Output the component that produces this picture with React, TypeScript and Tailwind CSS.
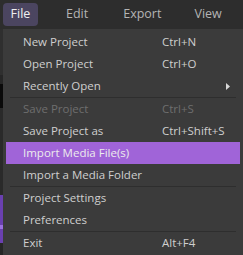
type Item = { label: string; shortcut?: string; disabled?: boolean; active?: boolean; submenu?: boolean; sep?: boolean };

const items: Item[] = [
  { label: "New Project", shortcut: "Ctrl+N" },
  { label: "Open Project", shortcut: "Ctrl+O" },
  { label: "Recently Open", submenu: true },
  { label: "Save Project", shortcut: "Ctrl+S", disabled: true, sep: true },
  { label: "Save Project as", shortcut: "Ctrl+Shift+S" },
  { label: "Import Media File(s)", active: true },
  { label: "Import a Media Folder" },
  { label: "Project Settings", sep: true },
  { label: "Preferences" },
  { label: "Exit", shortcut: "Alt+F4", sep: true },
];

function Row({ item }: { item: Item }) {
  return (
    <>
      {item.sep && <div className="mx-1 h-px bg-[#2e2e2e]" />}
      <div
        className={`flex h-[22px] items-center pl-[17px] ${
          item.active ? "bg-[#a064d8] text-[#ececec]" : item.disabled ? "text-[#6e6e6e]" : "text-[#cfcfcf]"
        }`}
      >
        <span className="w-[139px]">{item.label}</span>
        {item.shortcut && <span>{item.shortcut}</span>}
        {item.submenu && (
          <svg width="5" height="7" viewBox="0 0 5 7" className="ml-[64px]">
            <path d="M0 0 L4 3.5 L0 7 Z" fill="#d8d8d8" />
          </svg>
        )}
      </div>
    </>
  );
}

export default function App() {
  return (
    <div className="h-[255px] w-[243px] overflow-hidden bg-[#2b2b2b] text-[11.5px]" style={{ fontFamily: "'Open Sans', sans-serif" }}>
      <div className="flex h-[29px] items-center bg-[#2d2d2d] text-[12.5px] text-[#b4b4b4]">
        <div className="ml-[3px] flex h-[23px] w-[35px] items-center justify-center rounded bg-[#4b4560] text-[#f0f0f0]">File</div>
        <span className="ml-[28px]">Edit</span>
        <span className="ml-[35px]">Export</span>
        <span className="ml-[33px]">View</span>
      </div>
      <div className="flex">
        <div className="flex w-[3px] flex-col">
          <div className="h-[46px] bg-[#2f2f2f]" />
          <div className="h-[9px] bg-[#262626]" />
          <div className="h-[24px] bg-[#0a0a0a]" />
          <div className="h-[87px] bg-[#2a2a2a]" />
          <div className="flex h-[48px] flex-col bg-[#6a40b0]">
            <div className="mt-[30px] h-[4px] bg-[#9a70e0]" />
          </div>
          <div className="h-[12px] bg-[#262626]" />
        </div>
        <div className="h-[226px] flex-1 bg-[#3b3b3b] px-[3px] pt-[2px]">
          {items.map((it) => (
            <Row key={it.label} item={it} />
          ))}
        </div>
      </div>
    </div>
  );
}
